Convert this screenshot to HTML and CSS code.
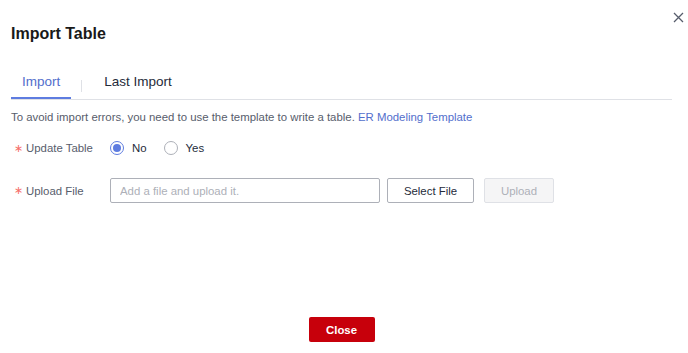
FILE: index.html
```html
<!DOCTYPE html>
<html lang="en">
<head>
  <meta charset="UTF-8">
  <title>Import Table</title>
  <link rel="stylesheet" href="styles.css">
</head>
<body>

  <div class="dialog">
    <!-- Close icon -->
    <button class="dialog-close" aria-label="Close">
      <svg width="11" height="11" viewBox="0 0 11 11">
        <path d="M1 1 L10 10 M10 1 L1 10" stroke="#575d6c" stroke-width="1.3" fill="none"/>
      </svg>
    </button>

    <h2 class="dialog-title">Import Table</h2>

    <!-- Tabs -->
    <div class="tabs">
      <div class="tab active">Import</div>
      <span class="tab-divider"></span>
      <div class="tab">Last Import</div>
    </div>

    <p class="tip">
      To avoid import errors, you need to use the template to write a table.
      <a href="#" class="link">ER Modeling Template</a>
    </p>

    <div class="form-row">
      <label class="form-label"><span class="required">∗</span>Update Table</label>
      <div class="radio-group">
        <label class="radio checked"><span class="radio-dot"></span>No</label>
        <label class="radio"><span class="radio-dot"></span>Yes</label>
      </div>
    </div>

    <div class="form-row upload-row">
      <label class="form-label"><span class="required">∗</span>Upload File</label>
      <input type="text" class="file-input" placeholder="Add a file and upload it.">
      <button class="btn btn-select">Select File</button>
      <button class="btn btn-upload" disabled>Upload</button>
    </div>

    <div class="dialog-footer">
      <button class="btn-close">Close</button>
    </div>
  </div>

</body>
</html>
```

FILE: styles.css
```css
body {
  margin: 0;
  padding: 0;
  background: #fff;
  font-family: 'Liberation Sans', Arial, sans-serif;
  font-size: 11.4px;
  color: #252b3a;
}

.dialog {
  position: relative;
  height: 353px;
  box-sizing: border-box;
  padding: 22px 16px 11px 11px;
  display: flex;
  flex-direction: column;
}

.dialog-close {
  position: absolute;
  top: 12px;
  right: 4px;
  width: 11px;
  height: 11px;
  padding: 0;
  border: none;
  background: none;
  cursor: pointer;
  display: flex;
}

.dialog-title {
  margin: 0;
  font-size: 16px;
  line-height: 24px;
  font-weight: bold;
  color: #191919;
}

.tabs {
  margin-top: 20px;
  display: flex;
  border-bottom: 1px solid #dfe1e6;
}

.tab {
  height: 31px;
  line-height: 32px;
  padding: 0 11px;
  font-size: 13.5px;
  color: #252b3a;
  border-bottom: 2px solid transparent;
  cursor: pointer;
}

.tab.active {
  color: #526ecc;
  border-bottom-color: #5e7ce0;
}

.tab-divider {
  width: 1px;
  height: 12px;
  margin: 14px 10px 0 10px;
  background: #dfe1e6;
}

.tab + .tab-divider + .tab {
  padding-left: 12px;
}

.tip {
  margin: 8px 0 0 0;
  line-height: 18px;
  color: #575d6c;
}

.link {
  color: #526ecc;
  text-decoration: none;
}

.form-row {
  display: flex;
  align-items: center;
  height: 24px;
  margin-top: 10px;
}

.upload-row {
  height: 25px;
  margin-top: 18px;
}

.form-label {
  width: 99px;
  flex-shrink: 0;
  display: flex;
  align-items: center;
  color: #575d6c;
}

.required {
  width: 7px;
  margin: 0 5px 0 3px;
  font-family: 'DejaVu Sans', sans-serif;
  font-size: 11px;
  color: #f66f6a;
}

.radio-group {
  display: flex;
  align-items: center;
}

.radio {
  display: flex;
  align-items: center;
  gap: 8px;
  margin-right: 17px;
  color: #252b3a;
  cursor: pointer;
}

.radio-dot {
  width: 14px;
  height: 14px;
  box-sizing: border-box;
  border: 1px solid #adb0b8;
  border-radius: 50%;
  display: flex;
  align-items: center;
  justify-content: center;
}

.radio.checked .radio-dot {
  border-color: #5e7ce0;
}

.radio.checked .radio-dot::after {
  content: "";
  width: 8px;
  height: 8px;
  border-radius: 50%;
  background: #5e7ce0;
}

.file-input {
  width: 270px;
  height: 25px;
  box-sizing: border-box;
  padding: 0 9px;
  border: 1px solid #adb0b8;
  border-radius: 2px;
  font-family: inherit;
  font-size: 11.4px;
  color: #252b3a;
  outline: none;
}

.file-input::placeholder {
  color: #adb0b8;
}

.btn {
  height: 25px;
  box-sizing: border-box;
  border-radius: 2px;
  font-family: inherit;
  font-size: 11.4px;
  cursor: pointer;
}

.btn-select {
  width: 87px;
  margin-left: 7px;
  background: #fff;
  border: 1px solid #adb0b8;
  color: #252b3a;
}

.btn-upload {
  width: 70px;
  margin-left: 10px;
  background: #f5f5f6;
  border: 1px solid #dfe1e6;
  color: #adb0b8;
  cursor: not-allowed;
}

.dialog-footer {
  margin-top: auto;
  display: flex;
  justify-content: center;
}

.btn-close {
  width: 66px;
  height: 25px;
  border: none;
  border-radius: 2px;
  background: #c7000b;
  color: #fff;
  font-family: inherit;
  font-size: 11.4px;
  font-weight: bold;
  cursor: pointer;
}
```
